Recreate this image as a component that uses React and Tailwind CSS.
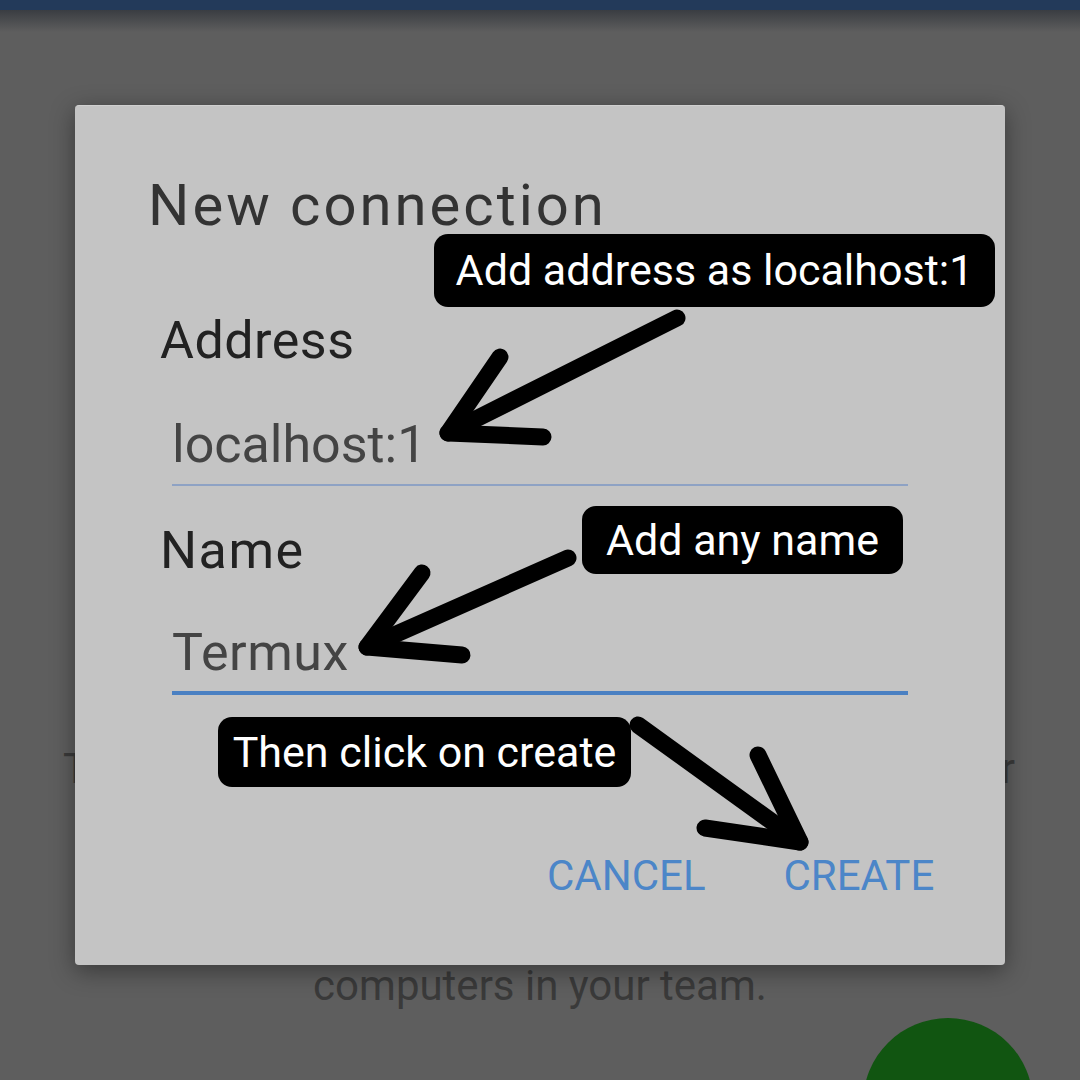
import React from "react";

export default function App() {
  return (
    <div className="relative w-[1080px] h-[1080px] overflow-hidden bg-[#5e5e5e]" style={{ fontFamily: "Roboto, 'Noto Sans', sans-serif" }}>
      {/* top bar */}
      <div className="h-[10px] bg-[#233a5a]" />
      <div className="h-[22px] bg-gradient-to-b from-[#3a3d42] to-[#5e5e5e]" />

      {/* background page content */}
      <div className="flex flex-col text-[42px] leading-[48px] text-[#3a3a3a]">
        <div className="mt-[713px] flex justify-between pl-[63px] pr-[65px] whitespace-nowrap">
          <span>To add a connection, tap</span>
          <span>the button below, or</span>
        </div>
        <div className="mt-[169px] text-center whitespace-nowrap">computers in your team.</div>
      </div>

      {/* FAB */}
      <div className="absolute left-[863px] top-[1018px] w-[170px] h-[170px] rounded-full bg-[#115511]" />

      {/* dialog */}
      <div className="absolute left-[75px] top-[105px] w-[930px] h-[860px] rounded-[4px] bg-[#c4c4c4] shadow-[0_6px_24px_rgba(0,0,0,0.4)] border-t border-[#d0d0d0]">
        <div className="flex flex-col pl-[73px] pt-[70px]">
          <div className="text-[58px] leading-[58px] tracking-[3px] text-[#333333]">New connection</div>
          <div className="mt-[81px] ml-[12px] text-[52px] leading-[52px] tracking-[0.5px] text-[#222222]">Address</div>
          <div className="mt-[52px] ml-[24px] text-[52px] leading-[52px] text-[#444444]">localhost:1</div>
          <div className="mt-[13px] ml-[24px] w-[736px] h-[2px] bg-[#8ea2c4]" />
          <div className="mt-[39px] ml-[12px] text-[52px] leading-[52px] tracking-[1.5px] text-[#222222]">Name</div>
          <div className="mt-[50px] ml-[24px] text-[52px] leading-[52px] tracking-[0.5px] text-[#444444]">Termux</div>
          <div className="mt-[12px] ml-[24px] w-[736px] h-[4px] bg-[#4a80c2]" />
          <div className="mt-[160px] flex pl-[399px] gap-[78px] text-[42px] leading-[42px] text-[#4c86c8]">
            <span>CANCEL</span>
            <span>CREATE</span>
          </div>
        </div>
      </div>

      {/* annotation boxes */}
      <div className="absolute left-[434px] top-[234px] w-[561px] h-[73px] rounded-[14px] bg-black flex items-center justify-center text-white text-[43px] leading-none whitespace-nowrap">
        Add address as localhost:1
      </div>
      <div className="absolute left-[582px] top-[506px] w-[321px] h-[68px] rounded-[14px] bg-black flex items-center justify-center text-white text-[43px] leading-none whitespace-nowrap">
        Add any name
      </div>
      <div className="absolute left-[218px] top-[717px] w-[413px] h-[70px] rounded-[14px] bg-black flex items-center justify-center text-white text-[43px] leading-none whitespace-nowrap">
        Then click on create
      </div>

      {/* arrows */}
      <svg className="absolute left-0 top-0" width="1080" height="1080" viewBox="0 0 1080 1080">
        <g fill="none" stroke="#000" strokeWidth="17" strokeLinecap="round" strokeLinejoin="round">
          <path d="M677 318 L448 433" />
          <path d="M500 357 L448 433 L543 437" />
          <path d="M568 558 L367 647" />
          <path d="M422 573 L367 647 L462 655" />
          <path d="M638 725 L800 842" />
          <path d="M758 755 L800 842 L705 828" />
        </g>
      </svg>
    </div>
  );
}
